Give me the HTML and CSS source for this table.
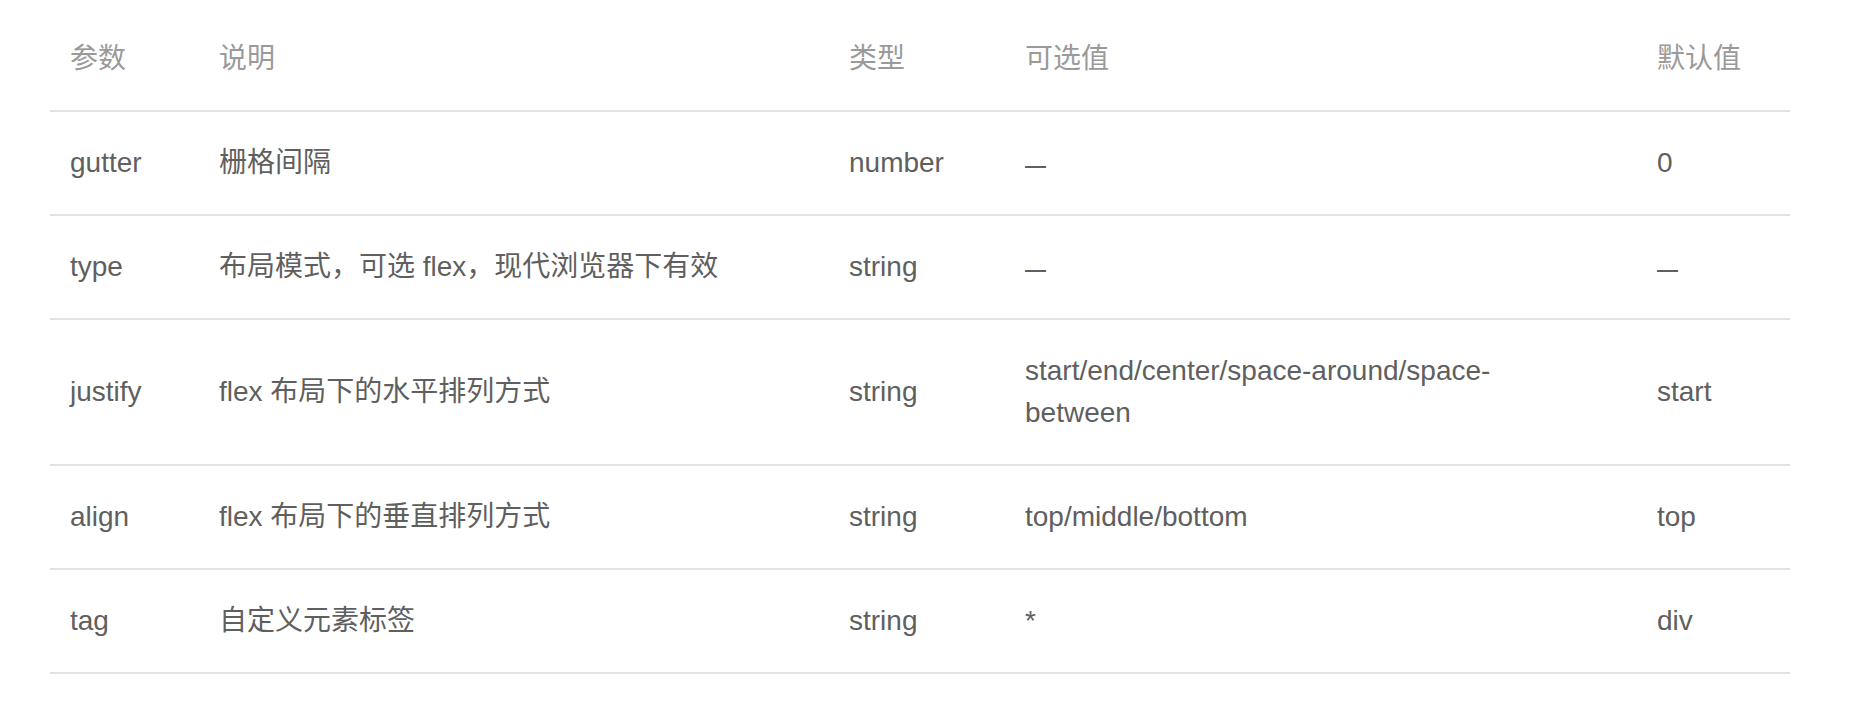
FILE: index.html
```html
<!DOCTYPE html>
<html lang="zh-CN">
<head>
<meta charset="utf-8">
<title>Row Attributes</title>
<link rel="stylesheet" href="styles.css">
</head>
<body>
<table class="api-table">
  <colgroup>
    <col class="c-param">
    <col class="c-desc">
    <col class="c-type">
    <col class="c-opts">
    <col class="c-default">
  </colgroup>
  <thead>
    <tr><th>参数</th><th>说明</th><th>类型</th><th class="opts">可选值</th><th>默认值</th></tr>
  </thead>
  <tbody>
    <tr><td>gutter</td><td>栅格间隔</td><td>number</td><td class="opts"><span class="dash">—</span></td><td>0</td></tr>
    <tr><td>type</td><td>布局模式，可选 flex，现代浏览器下有效</td><td>string</td><td class="opts"><span class="dash">—</span></td><td><span class="dash">—</span></td></tr>
    <tr><td>justify</td><td>flex 布局下的水平排列方式</td><td>string</td><td class="opts">start/end/center/space-around/space-between</td><td>start</td></tr>
    <tr><td>align</td><td>flex 布局下的垂直排列方式</td><td>string</td><td class="opts">top/middle/bottom</td><td>top</td></tr>
    <tr><td>tag</td><td>自定义元素标签</td><td>string</td><td class="opts">*</td><td>div</td></tr>
  </tbody>
</table>
</body>
</html>
```
FILE: styles.css
```css
html, body {
  background: #ffffff;
}
body {
  margin: 8px 64px 0 50px;
  font-family: "Liberation Sans", "Noto Sans CJK SC", sans-serif;
  font-size: 28px;
  line-height: 42px;
  color: #5f5f5f;
}
.api-table {
  width: 1740px;
  border-collapse: collapse;
  table-layout: fixed;
}
.c-param { width: 149px; }
.c-desc { width: 630px; }
.c-type { width: 176px; }
.c-opts { width: 632px; }
.c-default { width: 153px; }
.api-table th,
.api-table td {
  padding: 30px 10px 30px 20px;
  text-align: left;
  vertical-align: middle;
  border-bottom: 2px solid #e3e3e3;
}
.api-table td {
  height: 42px;
}
.api-table .opts {
  padding-right: 60px;
}
.api-table th {
  font-weight: normal;
  color: #9a9a9a;
}
.dash {
  font-size: 21px;
  font-weight: bold;
  line-height: 1;
}
```
